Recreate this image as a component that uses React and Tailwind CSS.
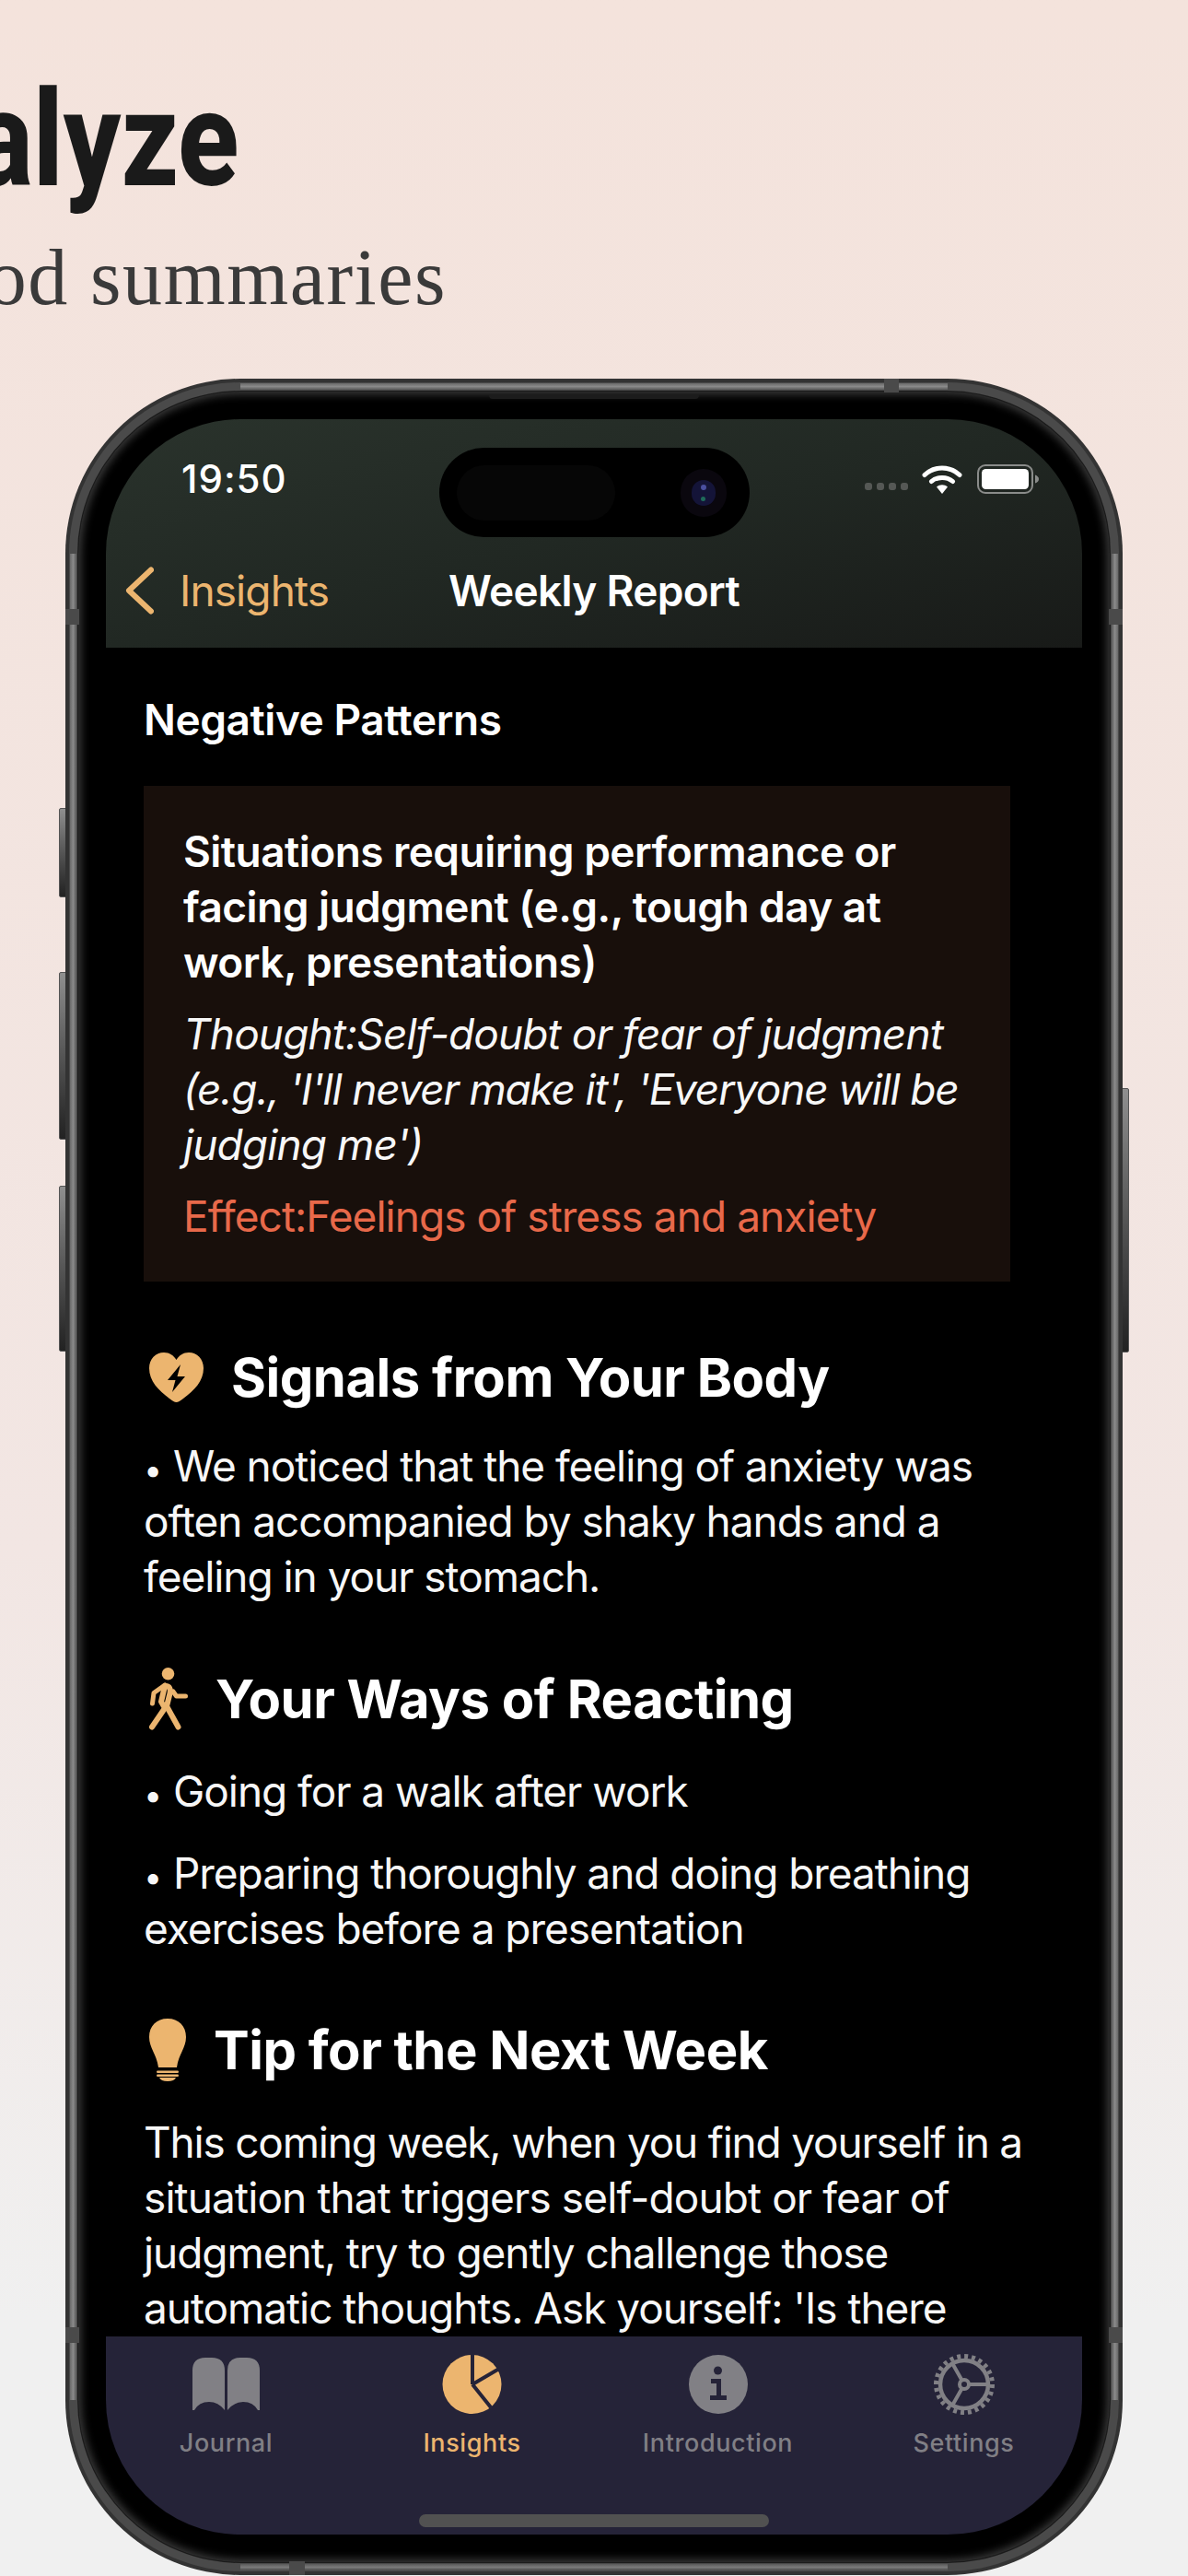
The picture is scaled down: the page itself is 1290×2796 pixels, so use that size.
const AMBER = "#ecb56f";
const Wifi = () => (
  <svg width="44" height="32" viewBox="0 0 44 32" fill="none">
    <path d="M3 11.5C13.5 1.5 30.5 1.5 41 11.5" stroke="#fff" strokeWidth="5" strokeLinecap="round" />
    <path d="M10.5 18.5C16.5 13 27.5 13 33.5 18.5" stroke="#fff" strokeWidth="5" strokeLinecap="round" />
    <path d="M16 24.5C19.5 21.5 24.5 21.5 28 24.5L22 32Z" fill="#fff" />
  </svg>
);
const Battery = () => (
  <svg width="68" height="32" viewBox="0 0 68 32" fill="none">
    <rect x="1" y="1" width="59" height="30" rx="8" stroke="#8a8c8a" strokeWidth="2" />
    <rect x="5" y="5" width="51" height="22" rx="4.5" fill="#fff" />
    <path d="M63 11.5C65.5 12.5 67 14 67 16C67 18 65.5 19.5 63 20.5Z" fill="#8a8c8a" />
  </svg>
);
const Heart = () => (
  <svg width="59" height="54" viewBox="0 0 59 54" className="shrink-0">
    <path d="M29.5 54C27.5 54 25.5 52.5 22 50C10 41 0 31 0 17C0 7 7 0 16 0C22 0 26.5 3 29.5 8C32.5 3 37 0 43 0C52 0 59 7 59 17C59 31 49 41 37 50C33.5 52.5 31.5 54 29.5 54Z" fill={AMBER} />
    <polygon points="34,13 20,30 28.5,30 25,43 39,26 30.5,26" fill="#000" />
  </svg>
);
const Walker = () => (
  <svg width="42" height="68" viewBox="0 0 42 68" fill="none" className="shrink-0">
    <circle cx="20.5" cy="6.8" r="6.8" fill={AMBER} />
    <path d="M17 19L5 27.5L3.5 39" stroke={AMBER} strokeWidth="5" strokeLinecap="round" strokeLinejoin="round" />
    <path d="M18 20C22 20 23.5 23 22.5 28L19 42L31.5 64.5" stroke={AMBER} strokeWidth="6" strokeLinecap="round" strokeLinejoin="round" />
    <path d="M17 20L13 37L17 44L3 64.5" stroke={AMBER} strokeWidth="6" strokeLinecap="round" strokeLinejoin="round" />
    <path d="M26 26L29.5 31H39.5" stroke={AMBER} strokeWidth="5" strokeLinecap="round" strokeLinejoin="round" />
  </svg>
);
const Bulb = () => (
  <svg width="40" height="68" viewBox="0 0 40 68" className="shrink-0">
    <path d="M20 0C32 0 40 8 40 20C40 32 32 38 30 53H10C8 38 0 32 0 20C0 8 8 0 20 0Z" fill={AMBER} />
    <rect x="8" y="56.5" width="24" height="2.5" rx="1.2" fill={AMBER} />
    <rect x="8" y="60.5" width="24" height="2.5" rx="1.2" fill={AMBER} />
    <path d="M11 64H29C28 66.5 25 68 20 68C15 68 12 66.5 11 64Z" fill={AMBER} />
  </svg>
);
const BookIcon = () => (
  <svg width="73" height="58" viewBox="0 0 73 58">
    <path d="M0 57V14Q0 0 14 0H21Q35 0 35 14V57Q28 48 18 48Q7 48 2 57Z" fill="#818085" />
    <path d="M73 57V14Q73 0 59 0H52Q38 0 38 14V57Q45 48 55 48Q66 48 71 57Z" fill="#818085" />
  </svg>
);
const PieIcon = () => (
  <svg width="65" height="64" viewBox="0 0 65 64" fill="none">
    <ellipse cx="32.5" cy="32" rx="32" ry="32" fill={AMBER} />
    <path d="M33 32V0M33 32L62 15M33 32L53 57" stroke="#252338" strokeWidth="4" />
  </svg>
);
const InfoIcon = () => (
  <svg width="64" height="64" viewBox="0 0 64 64">
    <ellipse cx="32" cy="32" rx="32" ry="32" fill="#818085" />
    <circle cx="31.5" cy="17" r="4.5" fill="#252338" />
    <path d="M24 26H35V44H41V49H23V44H30V31H24Z" fill="#252338" />
  </svg>
);
const GearIcon = () => (
  <svg width="68" height="68" viewBox="0 0 68 68" fill="none">
    <circle cx="34" cy="34" r="26" stroke="#818085" strokeWidth="4.5" />
    <circle cx="34" cy="34" r="30.5" stroke="#818085" strokeWidth="5" strokeDasharray="4 3.98" />
    <circle cx="34" cy="34" r="5" stroke="#818085" strokeWidth="4" />
    <path d="M39 34H60M31.5 38.5L21 57M31.5 29.5L21 11" stroke="#818085" strokeWidth="4" />
  </svg>
);
const Tab = ({ icon, label, active }) => (
  <div className="flex flex-col items-center">
    <div className="h-[68px] flex items-center justify-center">{icon}</div>
    <span className={`mt-[12px] text-[27px] leading-[36px] font-medium tracking-[0.6px] ${active ? "text-[#ecb56f]" : "text-[#807f85]"}`}>{label}</span>
  </div>
);
const Heading = ({ icon, children }) => (
  <div className="flex items-center gap-[30px] pl-[6px] h-[70px]">
    {icon}
    <h2 className="text-[58px] leading-[70px] font-bold tracking-[-0.5px] text-white whitespace-nowrap">{children}</h2>
  </div>
);
const Body = ({ children, className = "" }) => (
  <p className={`text-[46px] leading-[60px] tracking-[-1.05px] text-[#f7f7f7] whitespace-nowrap ${className}`}>{children}</p>
);
const Dot = () => <span className="text-[36px] leading-none tracking-[0.8px]">• </span>;

export default function App() {
  return (
    <div className="relative h-[2796px] w-[1290px] overflow-hidden bg-gradient-to-b from-[#f4e3dc] via-[#f2e6e3] via-60% to-[#f0f0f0] to-90%" style={{ fontFamily: "Inter, sans-serif" }}>
      <div className="pt-[72px] h-[411px]">
        <div className="w-[260px] flex justify-end h-[160px]">
          <h1 className="text-[144px] leading-[160px] font-extrabold text-[#1a1a1a] whitespace-nowrap origin-right scale-x-[.85]" style={{ fontFamily: "Roboto, sans-serif" }}>Analyze</h1>
        </div>
        <div className="w-[485px] flex justify-end mt-[24px]">
          <p className="text-[86px] leading-[90px] text-[#3a3a3a] tracking-[1.6px] whitespace-nowrap" style={{ fontFamily: "'Liberation Serif', serif" }}>Mood summaries</p>
        </div>
      </div>

      <div className="relative ml-[71px] w-[1148px] h-[2384px]">
        <div className="absolute left-[-7px] top-[466px] w-[9px] h-[97px] rounded-l-[2px] bg-gradient-to-b from-[#8f8f8f] via-[#555] to-[#222] border border-[#555]" />
        <div className="absolute left-[-7px] top-[644px] w-[9px] h-[182px] rounded-l-[2px] bg-gradient-to-b from-[#8f8f8f] via-[#555] to-[#222] border border-[#555]" />
        <div className="absolute left-[-7px] top-[876px] w-[9px] h-[180px] rounded-l-[2px] bg-gradient-to-b from-[#8f8f8f] via-[#555] to-[#222] border border-[#555]" />
        <div className="absolute right-[-7px] top-[770px] w-[9px] h-[287px] rounded-r-[2px] bg-gradient-to-b from-[#8f8f8f] via-[#555] to-[#222] border border-[#555]" />

        <div className="relative h-full rounded-[190px] bg-[#333] p-[4px]">
          <div className="h-full rounded-[186px] bg-[#4a4a4a] p-[9px]">
            <div className="h-full rounded-[177px] bg-[#1c1c1c] p-[1px]">
              <div className="h-full rounded-[176px] bg-black shadow-[inset_0_0_10px_3px_#3c3c3c] p-[30px]">
                <div className="relative flex h-full flex-col overflow-hidden rounded-[146px] bg-black">
                  <header className="h-[248px] shrink-0 bg-gradient-to-br from-[#2a332c] via-[#212823] to-[#181a18]">
                    <div className="flex h-[50px] items-center pl-[82px] pr-[46px] mt-[40px]">
                      <span className="text-[42px] leading-[50px] font-medium text-white tracking-[1px]">19:50</span>
                      <div className="ml-auto flex items-center">
                        <div className="mt-[16px] mr-[15px] flex gap-[5px]">
                          <i className="h-[8px] w-[8px] rounded-[3px] bg-[#555855]" />
                          <i className="h-[8px] w-[8px] rounded-[3px] bg-[#555855]" />
                          <i className="h-[8px] w-[8px] rounded-[3px] bg-[#555855]" />
                          <i className="h-[8px] w-[8px] rounded-[3px] bg-[#555855]" />
                        </div>
                        <Wifi />
                        <div className="ml-[16px]"><Battery /></div>
                      </div>
                    </div>
                    <nav className="mt-[46px] grid h-[100px] grid-cols-[1fr_auto_1fr] items-center">
                      <div className="flex items-center gap-[28px] pl-[21px]">
                        <svg width="31" height="52" viewBox="0 0 31 52" fill="none"><path d="M28 3.5L4 26L28 48.5" stroke={AMBER} strokeWidth="6" strokeLinecap="round" strokeLinejoin="round" /></svg>
                        <span className="text-[46px] tracking-[-0.9px] text-[#ecb56f]">Insights</span>
                      </div>
                      <span className="text-[46px] font-semibold tracking-[-0.7px] text-white">Weekly Report</span>
                      <div />
                    </nav>
                  </header>

                  <div className="absolute left-[362px] top-[31px] flex h-[97px] w-[337px] items-center rounded-full bg-black">
                    <div className="ml-[19px] h-[60px] w-[172px] rounded-full bg-[#060606]" />
                    <div className="ml-[71px] flex h-[52px] w-[50px] items-center justify-center rounded-full bg-[#0a070e]">
                      <div className="relative h-[28px] w-[26px] rounded-full bg-[#141438]">
                        <div className="absolute left-[10px] top-[5px] h-[6px] w-[6px] rounded-full bg-[#4a4fa0]" />
                        <div className="absolute left-[10px] top-[18px] h-[5px] w-[5px] rounded-full bg-[#1f6a5a]" />
                      </div>
                    </div>
                  </div>

                  <main className="min-h-0 flex-1 overflow-hidden bg-black pl-[41px] pt-[48px]">
                    <h3 className="text-[46px] leading-[60px] font-semibold tracking-[-0.45px] text-white">Negative Patterns</h3>
                    <section className="mt-[42px] w-[941px] bg-[#180f0b] pb-[41px] pl-[43px] pt-[41px]">
                      <Body className="font-semibold !tracking-[-0.55px] text-white">Situations requiring performance or<br />facing judgment (e.g., tough day at<br />work, presentations)</Body>
                      <Body className="mt-[18px] italic !tracking-[-0.9px]">Thought:Self-doubt or fear of judgment<br /><span className="tracking-[-1.2px]">(e.g., 'I'll never make it', 'Everyone will be</span><br />judging me')</Body>
                      <Body className="mt-[18px] !text-[#e8694a] !tracking-[-0.95px]">Effect:Feelings of stress and anxiety</Body>
                    </section>
                    <div className="mt-[69px]"><Heading icon={<Heart />}>Signals from Your Body</Heading></div>
                    <Body className="mt-[31px]"><Dot />We noticed that the feeling of anxiety was<br />often accompanied by shaky hands and a<br />feeling in your stomach.</Body>
                    <div className="mt-[68px]"><Heading icon={<Walker />}>Your Ways of Reacting</Heading></div>
                    <Body className="mt-[35px]"><Dot />Going for a walk after work</Body>
                    <Body className="mt-[29px]"><Dot />Preparing thoroughly and doing breathing<br />exercises before a presentation</Body>
                    <div className="mt-[67px]"><Heading icon={<Bulb />}>Tip for the Next Week</Heading></div>
                    <Body className="mt-[35px]"><span className="tracking-[-1.2px]">This coming week, when you find yourself in a</span><br /><span className="tracking-[-0.9px]">situation that triggers self-doubt or fear of</span><br />judgment, try to gently challenge those<br />automatic thoughts. Ask yourself: 'Is there</Body>
                  </main>

                  <footer className="relative h-[215px] shrink-0 bg-[#252338] pt-[18px]">
                    <div className="grid grid-cols-[repeat(4,267px)] justify-center pl-[2px]">
                      <Tab icon={<BookIcon />} label="Journal" />
                      <Tab icon={<PieIcon />} label="Insights" active />
                      <Tab icon={<InfoIcon />} label="Introduction" />
                      <Tab icon={<GearIcon />} label="Settings" />
                    </div>
                    <div className="absolute bottom-[8px] left-[340px] h-[14px] w-[380px] rounded-full bg-[#515151]" />
                  </footer>
                </div>
              </div>
            </div>
          </div>

          {/* brushed-metal highlights on the straight parts of the band */}
          <div className="absolute left-[190px] right-[190px] top-[5px] h-[7px] bg-gradient-to-b from-[#6a6a6a] via-[#8a8a8a] to-[#5a5a5a]" />
          <div className="absolute left-[190px] right-[190px] bottom-[5px] h-[7px] bg-gradient-to-b from-[#5a5a5a] via-[#7a7a7a] to-[#4a4a4a]" />
          <div className="absolute bottom-[190px] left-[5px] top-[190px] w-[7px] bg-gradient-to-r from-[#6a6a6a] via-[#8a8a8a] to-[#5a5a5a]" />
          <div className="absolute bottom-[190px] right-[5px] top-[190px] w-[7px] bg-gradient-to-l from-[#6a6a6a] via-[#8a8a8a] to-[#5a5a5a]" />

          <div className="absolute left-[889px] top-0 h-[15px] w-[16px] bg-[#4a4a4a]" />
          <div className="absolute left-[243px] bottom-0 h-[15px] w-[17px] bg-[#4a4a4a]" />
          <div className="absolute left-0 top-[250px] h-[17px] w-[15px] bg-[#4a4a4a]" />
          <div className="absolute right-0 top-[250px] h-[17px] w-[15px] bg-[#4a4a4a]" />
          <div className="absolute bottom-[252px] left-0 h-[17px] w-[15px] bg-[#4a4a4a]" />
          <div className="absolute bottom-[252px] right-0 h-[17px] w-[15px] bg-[#4a4a4a]" />
          <div className="absolute left-[460px] top-[17px] h-[5px] w-[228px] rounded-b-[4px] bg-[#1c1c1c]" />
        </div>
      </div>
    </div>
  );
}
